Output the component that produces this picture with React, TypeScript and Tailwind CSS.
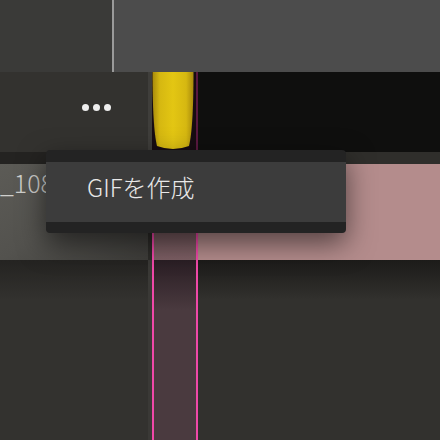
import React from "react";

const font = { fontFamily: '"Noto Sans CJK JP", "Noto Sans", sans-serif' };

function Handle() {
  return (
    <svg width="42" height="78" viewBox="0 0 42 78" className="block">
      <defs>
        <linearGradient id="pill" x1="0" y1="0" x2="1" y2="0">
          <stop offset="0" stopColor="#a88a0c" />
          <stop offset="0.18" stopColor="#d6b811" />
          <stop offset="0.5" stopColor="#e3c613" />
          <stop offset="0.82" stopColor="#d6b811" />
          <stop offset="1" stopColor="#a88a0c" />
        </linearGradient>
      </defs>
      <path d="M0.5 0 H41.5 C41.5 36 40 62 37 74 Q21 80 5 74 C2 62 0.5 36 0.5 0 Z" fill="url(#pill)" />
    </svg>
  );
}

export default function App() {
  return (
    <div className="relative h-[440px] w-[440px] overflow-hidden bg-[#32312e]" style={font}>
      {/* top strip */}
      <div className="flex h-[72px]">
        <div className="w-[112px] bg-[#3a3a38]" />
        <div className="w-[2px] bg-[#9a9a9a]" />
        <div className="flex-1 bg-[#4c4c4c]" />
      </div>

      <div className="flex h-[368px]">
        {/* track header */}
        <div className="flex w-[148px] flex-col">
          <div className="flex h-[80px] items-center justify-end gap-[4px] bg-[#33322f] pb-[9px] pr-[37px]">
            <span className="h-[7px] w-[7px] rounded-full bg-[#eeeeee]" />
            <span className="h-[7px] w-[7px] rounded-full bg-[#eeeeee]" />
            <span className="h-[7px] w-[7px] rounded-full bg-[#eeeeee]" />
          </div>
          <div className="h-[12px] bg-[#242321]" />
          <div className="h-[96px] overflow-hidden bg-gradient-to-br from-[#5c5b56] via-[#53524e] to-[#3e3d3a] pt-[6px]">
            <div className="whitespace-nowrap text-[25px] font-light leading-none text-[#cfcfcc]">_108</div>
          </div>
          <div className="flex-1 bg-gradient-to-b from-[#242321] to-[#33322f] to-[40px]" />
        </div>

        {/* divider */}
        <div className="flex w-[4px] flex-col">
          <div className="h-[80px] bg-[#3f3e3b]" />
          <div className="h-[12px] bg-[#2a2927]" />
          <div className="h-[96px] bg-[#2d2c29]" />
          <div className="flex-1 bg-[#3a3936]" />
        </div>

        {/* playhead / selection column */}
        <div className="flex w-[46px] flex-col">
          <div className="flex h-[78px] bg-[#170c12]">
            <Handle />
            <div className="ml-[2px] w-[2px] bg-[#5a1840]" />
          </div>
          <div className="flex flex-1 flex-col border-x-2 border-[#f048a8]">
            <div className="h-[14px] bg-[#2a2026]" />
            <div className="h-[96px] bg-gradient-to-b from-[#6a5054] to-[#7d5f64]" />
            <div className="flex-1 bg-gradient-to-b from-[#2a1e24] to-[#4a3a3f] to-[50px]" />
          </div>
        </div>

        {/* right track */}
        <div className="flex flex-1 flex-col">
          <div className="h-[80px] bg-[#0f0f0e]" />
          <div className="h-[12px] bg-[#2f2e2b]" />
          <div className="h-[96px] bg-[#b48c8c]" />
          <div className="flex-1 bg-gradient-to-b from-[#1c1b19] to-[#32312e] to-[40px]" />
        </div>
      </div>

      {/* context menu */}
      <div className="absolute left-[46px] top-[150px] flex h-[83px] w-[300px] flex-col overflow-hidden rounded-[4px] bg-[#232323] shadow-[0_10px_28px_rgba(0,0,0,0.55)]">
        <div className="h-[12px]" />
        <div className="h-[60px] bg-[#3c3c3c] pl-[41px] pt-[13px] text-[24px] font-light leading-none text-[#e8e8e8]">
          GIFを作成
        </div>
      </div>
    </div>
  );
}
